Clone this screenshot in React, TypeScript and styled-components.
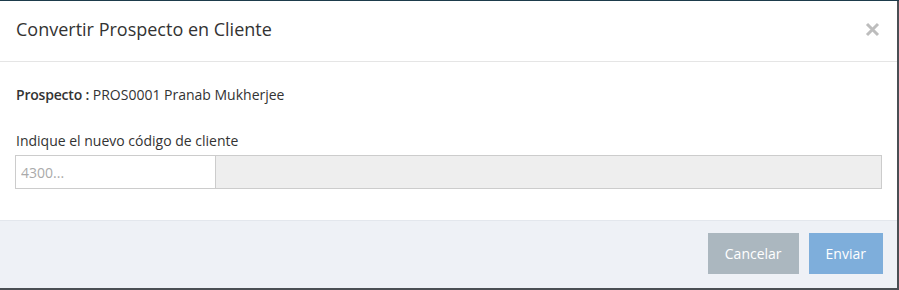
import React from "react";
import styled, { createGlobalStyle } from "styled-components";

const Global = createGlobalStyle`
  html, body { margin: 0; padding: 0; }
  body {
    background: #4a4f54;
    font-family: "Open Sans", "Noto Sans", sans-serif;
    width: 899px;
    height: 290px;
    overflow: hidden;
  }
`;

const Backdrop = styled.div`
  width: 899px;
  height: 290px;
  border-top: 1px solid #1d3b4b;
  box-sizing: border-box;
  background: #4a4f54;
`;

const Modal = styled.div`
  width: 897px;
  height: 287px;
  background: #fff;
  display: flex;
  flex-direction: column;
`;

const Header = styled.div`
  height: 61px;
  box-sizing: border-box;
  border-bottom: 1px solid #e5e5e5;
  display: flex;
  align-items: center;
  justify-content: space-between;
  padding: 0 17px 4px 16px;
`;

const Title = styled.h4`
  margin: 0;
  font-size: 18px;
  font-weight: 400;
  color: #333;
`;

const Close = styled.button`
  border: 0;
  background: transparent;
  padding: 0;
  width: 16px;
  height: 16px;
  display: flex;
  align-items: center;
  justify-content: center;
`;

const Body = styled.div`
  flex: 1;
  padding: 23px 15px 0 16px;
  font-size: 14px;
  color: #333;
`;

const Info = styled.p`
  margin: 0 0 26px 0;
  line-height: 20px;
`;

const Strong = styled.span`
  font-weight: 600;
  letter-spacing: -0.2px;
`;

const Label = styled.div`
  line-height: 20px;
  margin-bottom: 4px;
`;

const InputGroup = styled.div`
  display: flex;
  height: 34px;
  margin-left: -1px;
`;

const Input = styled.input`
  width: 200px;
  box-sizing: border-box;
  height: 34px;
  border: 1px solid #ccc;
  border-right: 0;
  padding: 0 5px;
  font-family: inherit;
  font-size: 14px;
  color: #333;
  outline: none;
  &::placeholder { color: #aaa; }
`;

const Addon = styled.div`
  flex: 1;
  background: #eee;
  border: 1px solid #ccc;
`;

const Footer = styled.div`
  height: 68px;
  flex-shrink: 0;
  box-sizing: border-box;
  background: #eef1f6;
  border-top: 1px solid #e3e7ed;
  display: flex;
  justify-content: flex-end;
  align-items: flex-start;
  gap: 10px;
  padding: 12px 14px 0 0;
`;

const Button = styled.button<{ $variant: "muted" | "primary" }>`
  height: 41px;
  border: 0;
  padding: 0 17px;
  font-family: inherit;
  font-size: 14px;
  color: #fff;
  background: ${(p) => (p.$variant === "muted" ? "#abb7bf" : "#7eaedb")};
`;

export default function App() {
  return (
    <>
      <Global />
      <Backdrop>
        <Modal>
          <Header>
            <Title>Convertir Prospecto en Cliente</Title>
            <Close aria-label="Cerrar">
              <svg width="15" height="15" viewBox="0 0 15 15">
                <path d="M2 2 L13 13 M13 2 L2 13" stroke="#bdbdbd" strokeWidth="3" />
              </svg>
            </Close>
          </Header>
          <Body>
            <Info>
              <Strong>Prospecto :</Strong> PROS0001 Pranab Mukherjee
            </Info>
            <Label>Indique el nuevo código de cliente</Label>
            <InputGroup>
              <Input placeholder="4300..." />
              <Addon />
            </InputGroup>
          </Body>
          <Footer>
            <Button $variant="muted">Cancelar</Button>
            <Button $variant="primary">Enviar</Button>
          </Footer>
        </Modal>
      </Backdrop>
    </>
  );
}
